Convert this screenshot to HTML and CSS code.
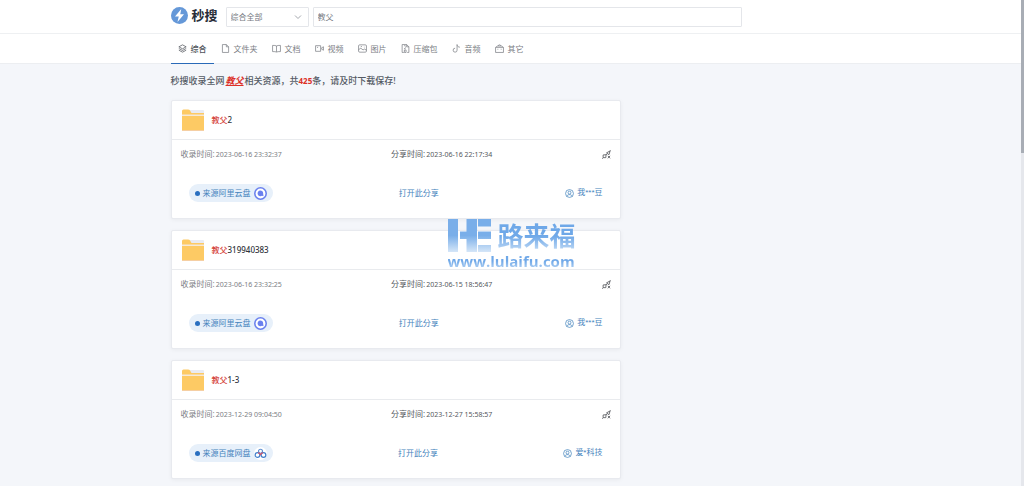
FILE: index.html
```html
<!DOCTYPE html>
<html lang="zh-CN">
<head>
<meta charset="utf-8">
<title>秒搜 - 教父</title>
<link rel="stylesheet" href="styles.css">
</head>
<body>
<svg class="sprite" aria-hidden="true">
  <symbol id="i-layers" viewBox="0 0 16 16"><path d="M8 1.500 14.500 5 8 8.500 1.500 5zM1.500 8 8 11.500 14.500 8M1.500 11 8 14.500 14.500 11"/></symbol>
  <symbol id="i-file" viewBox="0 0 16 16"><path d="M2.500 1h7l4 4v10h-11zM9.500 1v4h4"/></symbol>
  <symbol id="i-book" viewBox="0 0 16 16"><path d="M8 3.500C6.500 2.500 4 2.500 1 2.500v11c3 0 5.500 0 7 .8 1.500-.8 4-.8 7-.8v-11c-3 0-5.500 0-7 1zV14"/></symbol>
  <symbol id="i-video" viewBox="0 0 16 16"><path d="M1 3h9v10H1zM12 6.500 15.300 5v6L12 9.500zM3.500 6h2"/></symbol>
  <symbol id="i-image" viewBox="0 0 16 16"><rect x="1" y="1.500" width="14" height="13" rx="2"/><path d="m1 10 4-2.500 4 3 2.500-1.500L15 11M5 4.500h2M10.500 5.500h1"/></symbol>
  <symbol id="i-zip" viewBox="0 0 16 16"><path d="M5 15H2V1h8l4 4v10h-3M10 1v4h4M5.500 3H8M7 5.500h2M5.500 8H8M6 10.500h3V15H6z"/></symbol>
  <symbol id="i-music" viewBox="0 0 16 16"><path d="M9 1v10a3.500 3.500 0 1 1-3.500-3.500M9 1c.3 3 2 4.500 5 4.700"/></symbol>
  <symbol id="i-other" viewBox="0 0 16 16"><path d="M1 6h14v9H1zM1.500 6 4 3.500h8L14.500 6M5.500 3.500C6 .8 10 .8 10.500 3.500M5 8.500v1.500M11 8.500v1.500"/></symbol>
  <symbol id="i-plug" viewBox="0 0 20 20"><path d="M10 6.500 18 2l-2.500 8.500zM17 3l2-2M2.500 11l6.500-.5-.5 6.500h-6zM2.500 17l-2 2.500M9 11l3-3M13 13l5 5.500M18 13l-5 5.500"/></symbol>
  <symbol id="i-user" viewBox="0 0 16 16"><circle cx="8" cy="8" r="7"/><circle cx="8" cy="6.500" r="2.600"/><path d="M3.500 13c.8-2.400 2.300-3 4.500-3s3.700.6 4.500 3"/></symbol>
  <symbol id="i-folder" viewBox="0 0 22 22"><path fill="#e9ebf3" d="M6 1h15q1 0 1 1v6H1z"/><path fill="#fdca64" d="M0 2q0-1.500 1.500-1.500H6q1.500 0 2.200 1.200L9.500 4H22v17q0 1-1 1H1q-1 0-1-1z"/><path fill="#f5e9da" d="M0 5.500h22V7H0z"/><path fill="#f5cfa4" d="M0 21h22q0 1-1 1H1q-1 0-1-1z"/></symbol>
  <symbol id="i-ali" viewBox="0 0 26 26"><circle cx="13" cy="13" r="13" fill="#6a80ee"/><circle cx="13" cy="13" r="9.800" fill="#fff"/><path fill="#6a80ee" d="M12.500 7a5.800 5.800 0 0 1 5.800 5.500l.7 6-3-.8A5.800 5.800 0 1 1 12.500 7z"/></symbol>
  <symbol id="i-baidu" viewBox="0 0 26 26"><circle cx="13" cy="13" r="13" fill="#fff"/><g fill="none" stroke-width="2.400"><circle cx="13" cy="8.500" r="4" stroke="#5b8fd2"/><circle cx="7" cy="16" r="4.700" stroke="#4280cd"/><circle cx="19" cy="16" r="4.700" stroke="#4280cd"/><path stroke="#de5262" d="M8 11.500q3 .3 5 3.500 2-3.200 5-3.500"/></g></symbol>
</svg>

<header class="topbar">
  <form class="container search">
    <a class="brand" href="#">
      <svg class="brand-mark" viewBox="0 0 34 34" aria-hidden="true"><circle cx="17" cy="17" r="17" fill="#6598d8"/><path fill="#fff" d="M20.500 4 8 19h7.500L13 30l13-15.500h-7.500z"/></svg>
      <span>秒搜</span>
    </a>
    <span class="select-wrap">
      <select class="field" aria-label="搜索类型"><option>综合全部</option></select>
      <svg class="chevron" viewBox="0 0 8 8" aria-hidden="true"><path d="m1 2.500 3 3 3-3"/></svg>
    </span>
    <input class="field query" type="text" value="教父" aria-label="搜索关键词">
  </form>
</header>

<nav class="tabs">
  <div class="container tab-list">
    <a class="tab active" href="#"><svg class="icon"><use href="#i-layers"/></svg>综合</a>
    <a class="tab" href="#"><svg class="icon"><use href="#i-file"/></svg>文件夹</a>
    <a class="tab" href="#"><svg class="icon"><use href="#i-book"/></svg>文档</a>
    <a class="tab" href="#"><svg class="icon"><use href="#i-video"/></svg>视频</a>
    <a class="tab" href="#"><svg class="icon"><use href="#i-image"/></svg>图片</a>
    <a class="tab" href="#"><svg class="icon"><use href="#i-zip"/></svg>压缩包</a>
    <a class="tab" href="#"><svg class="icon"><use href="#i-music"/></svg>音频</a>
    <a class="tab" href="#"><svg class="icon"><use href="#i-other"/></svg>其它</a>
  </div>
</nav>

<main class="container">
  <h1 class="summary">秒搜收录全网<em>教父</em>相关资源，共<b>425</b>条，请及时下载保存!</h1>
  <div class="results">
    <article class="card">
      <h2 class="card-title"><svg class="folder"><use href="#i-folder"/></svg><span><mark>教父</mark>2</span></h2>
      <div class="meta"><span>收录时间:<time>2023-06-16 23:32:37</time></span><span class="shared">分享时间:<time>2023-06-16 22:17:34</time></span><svg class="icon plug"><use href="#i-plug"/></svg></div>
      <div class="actions"><a class="source" href="#">来源阿里云盘<svg class="drive"><use href="#i-ali"/></svg></a><a href="#">打开此分享</a><a class="user" href="#"><svg class="icon"><use href="#i-user"/></svg>我***豆</a></div>
    </article>
    <article class="card">
      <h2 class="card-title"><svg class="folder"><use href="#i-folder"/></svg><span><mark>教父</mark>319940383</span></h2>
      <div class="meta"><span>收录时间:<time>2023-06-16 23:32:25</time></span><span class="shared">分享时间:<time>2023-06-15 18:56:47</time></span><svg class="icon plug"><use href="#i-plug"/></svg></div>
      <div class="actions"><a class="source" href="#">来源阿里云盘<svg class="drive"><use href="#i-ali"/></svg></a><a href="#">打开此分享</a><a class="user" href="#"><svg class="icon"><use href="#i-user"/></svg>我***豆</a></div>
    </article>
    <article class="card">
      <h2 class="card-title"><svg class="folder"><use href="#i-folder"/></svg><span><mark>教父</mark>1-3</span></h2>
      <div class="meta"><span>收录时间:<time>2023-12-29 09:04:50</time></span><span class="shared">分享时间:<time>2023-12-27 15:58:57</time></span><svg class="icon plug"><use href="#i-plug"/></svg></div>
      <div class="actions"><a class="source" href="#">来源百度网盘<svg class="drive"><use href="#i-baidu"/></svg></a><a href="#">打开此分享</a><a class="user" href="#"><svg class="icon"><use href="#i-user"/></svg>爱*科技</a></div>
    </article>
    <div class="watermark">
      <div class="watermark-top">
        <svg class="watermark-logo" viewBox="0 0 43 33" aria-hidden="true">
          <defs><linearGradient id="fade" gradientUnits="userSpaceOnUse" x1="0" y1="0" x2="0" y2="33"><stop offset=".5" stop-color="#79aee9"/><stop offset="1" stop-color="#d5e6f8"/></linearGradient></defs>
          <g fill="url(#fade)"><rect width="10" height="33"/><rect x="12" y="12.500" width="7" height="7.500"/><rect x="18.500" width="10.500" height="33"/><rect x="30" width="13" height="7.500"/><rect x="30" y="12.500" width="13" height="7.500"/><rect x="30" y="26" width="13" height="7"/></g>
        </svg>
        <span class="watermark-name">路来福</span>
      </div>
      <span class="watermark-url">www.lulaifu.com</span>
    </div>
  </div>
</main>
<div class="scroll-track"><div class="scroll-thumb"></div></div>
</body>
</html>
```
FILE: styles.css
```css
* { box-sizing: border-box; }

body {
  margin: 0;
  padding-right: 3px;
  min-height: 100vh;
  background: #f4f6fa;
  color: #606266;
  font: 8px/14px "Noto Sans", "Noto Sans CJK SC", sans-serif;
}

a { color: #4583bd; text-decoration: none; }
.sprite { position: absolute; width: 0; height: 0; }
.container { width: 100%; max-width: 680px; margin: 0 auto; }

.icon {
  width: 9px;
  height: 9px;
  flex: none;
  fill: none;
  stroke: currentColor;
  stroke-width: 1.3;
}

.topbar { background: #fff; border-bottom: 1px solid #eef0f2; }
.search { display: flex; align-items: center; height: 33px; }

.brand {
  display: flex;
  align-items: center;
  gap: 4px;
  height: 30px;
  align-self: flex-start;
  margin-right: 8px;
  color: #272d38;
  font-size: 13px;
  font-weight: 700;
}
.brand-mark { width: 17px; height: 17px; }

.field {
  height: 20px;
  padding: 0 4px;
  border: 1px solid #e4e6ea;
  border-radius: 1px;
  background: #fff;
  color: #76797f;
  font: inherit;
  outline: none;
}
.select-wrap { position: relative; margin-right: 4px; }
.select-wrap .field { display: block; width: 83px; appearance: none; }
.chevron {
  position: absolute;
  right: 7px;
  top: 6px;
  width: 8px;
  height: 8px;
  fill: none;
  stroke: #a5a8ae;
  pointer-events: none;
}
.query { width: 429px; }

.tabs { background: #fff; border-bottom: 1px solid #eceef1; }
.tab-list { display: flex; height: 29px; }
.tab {
  display: flex;
  align-items: center;
  gap: 4px;
  padding: 0 7px;
  color: #7b7e84;
}
.tab.active {
  color: #50545b;
  font-weight: 500;
  box-shadow: 0 1px #2a6ab8;
}

.summary {
  margin: 0;
  padding: 10px 0 12px;
  color: #555b65;
  font-size: 9px;
  line-height: 14px;
  font-weight: 500;
}
.summary em {
  margin: 0 1px;
  color: #dc3027;
  font-weight: 700;
  text-decoration: underline;
}
.summary b { color: #dc3027; font-size: 8px; }

.results {
  position: relative;
  display: grid;
  gap: 11px;
  max-width: 450px;
  padding-bottom: 7px;
}
.card {
  background: #fff;
  border: 1px solid #e8eaef;
  border-radius: 2px;
  box-shadow: 0 1px 4px #0000000d;
}
.card-title {
  display: flex;
  align-items: center;
  gap: 8px;
  height: 39px;
  margin: 0;
  padding: 0 10px;
  border-bottom: 1px solid #e9ebee;
  color: #30343b;
  font-size: 8px;
  font-weight: 500;
}
.card-title mark { background: none; color: #d5423a; }
.folder { width: 22px; height: 22px; }

.meta {
  display: flex;
  justify-content: space-between;
  align-items: center;
  height: 28px;
  padding: 0 9px;
  color: #7b7e84;
}
.shared { color: #55585e; }
time { margin-left: 1px; font-size: 7px; }
.plug { color: #606266; stroke-width: 2; }

.actions {
  display: flex;
  justify-content: space-between;
  align-items: center;
  padding: 16px 17px;
}
.source {
  display: flex;
  align-items: center;
  gap: 3px;
  height: 18px;
  padding: 0 6px;
  border-radius: 9px;
  background: #e7f0fa;
}
.source::before {
  content: "";
  width: 5px;
  height: 5px;
  border-radius: 50%;
  background: #2a6fc0;
}
.drive { width: 13px; height: 13px; }
.user {
  display: flex;
  align-items: center;
  gap: 3px;
  font-family: "Liberation Sans", "Noto Sans CJK SC", sans-serif;
}

.watermark {
  position: absolute;
  top: 119px;
  left: 277px;
  pointer-events: none;
}
.watermark-top { display: flex; align-items: center; gap: 7px; }
.watermark-logo { width: 43px; height: 33px; }
.watermark-name,
.watermark-url {
  color: transparent;
  background: linear-gradient(#6fa8e8 50%, #c0daf5);
  background-clip: text;
  font-weight: 700;
}
.watermark-name { font-size: 26px; line-height: 30px; }
.watermark-url { display: block; font: 700 15px/18px "Open Sans", sans-serif; }

.scroll-track {
  position: fixed;
  top: 0;
  right: 0;
  bottom: 0;
  width: 3px;
  background: #e5e7ec;
}
.scroll-thumb { height: 153px; background: #a8adb5; }
```
